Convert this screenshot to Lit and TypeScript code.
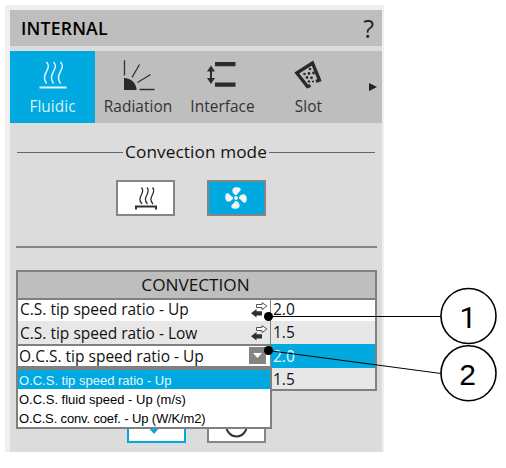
import { LitElement, html, css, svg } from "lit";
import { customElement } from "lit/decorators.js";
import { classMap } from "lit/directives/class-map.js";

const blade = "M10.2 8C8 6.5 7 4.5 7.5 2.5C8 .7 10 .2 12 .3C14 .3 15.8 1 15.7 2.5C15.5 4.8 12.5 5.5 11.8 8Z";

const icons = {
  fluidic: svg`<svg width="28" height="30" viewBox="0 0 28 30" fill="none" stroke="#e6f7fd">
    <path stroke-width="1.5" d="M7.500 2C14 9 .5 14 7.500 23.500M14.500 2C21 9 7.500 14 14.500 23.500M21.500 2C28 9 14.500 14 21.500 23.500"/>
    <path stroke-width="2" d="M.5 27.500H27.500"/></svg>`,
  radiation: svg`<svg width="32" height="32" viewBox="0 0 32 32" fill="none" stroke="#303030">
    <path d="M1 18A12.500 12 0 0 1 13.500 30H1Z" fill="#292929" stroke="none"/>
    <path stroke-width="1.300" d="M1.500 .3V15.500M9 17.500L16.500 4.500M14.500 22.500L27.500 14.500M16.500 29.500H31.500"/></svg>`,
  interface: svg`<svg width="30" height="26" viewBox="0 0 30 26" fill="#2b2b2b">
    <path d="M9 0H29.500V4.200H9ZM9 20.500H29.500V24.700H9ZM5 3.500L9 9.500H6V16H9L5 22L1 16H4V9.500H1Z"/></svg>`,
  slot: svg`<svg width="28" height="29" viewBox="0 0 28 29" fill="none" stroke="#292929">
    <path stroke-width="3.300" d="M16.500 25.500L13.500 26.500L2.800 13L18.500 3L25.500 20L22 21.500"/>
    <g fill="#292929" stroke="none"><circle cx="16" cy="9" r="1.300"/><circle cx="10.500" cy="14" r="1.300"/><circle cx="15" cy="13.500" r="1.400"/><circle cx="19.500" cy="13" r="1.400"/><circle cx="13" cy="17.500" r="1.400"/><circle cx="17.500" cy="17.800" r="1.400"/><circle cx="15" cy="21.500" r="1.300"/><circle cx="19" cy="21.500" r="1.100"/></g></svg>`,
  convection: svg`<svg width="22" height="23" viewBox="0 0 22 23" fill="none" stroke="#303030">
    <path stroke-width="1.300" d="M6.500 .5C11.500 6 .5 10 7 17M12 .5C17 6 6 10 12.500 17M17.500 .5C22.500 6 11.500 10 18 17"/>
    <path stroke-width="2" d="M1 22.500V19.500H21V22.500"/></svg>`,
  fan: svg`<svg width="22" height="22" viewBox="0 0 22 22" fill="#f4f4f4">
    <circle cx="11" cy="11" r="1.900"/>
    ${[0, 90, 180, 270].map((a) => svg`<path transform=${`rotate(${a} 11 11)`} d=${blade}/>`)}</svg>`,
  swap: svg`<svg width="17" height="16" viewBox="0 0 17 16">
    <path d="M5.500 2.500H11V.6L15.900 4L11 7.600V5.500H5.500Z" fill="#fff" stroke="#555"/>
    <path d="M11 9.300H5.500V7L0 11.300L5.500 15.600V13.400H11Z" fill="#303030"/></svg>`,
};

@customElement("app-root")
export class AppRoot extends LitElement {
  static styles = css`
    :host { display: block; position: relative; width: 506px; height: 468px; overflow: hidden;
      background: #fff; color: #111; font-family: "Open Sans", "Noto Sans", sans-serif; }
    * { box-sizing: border-box; }
    svg { display: block; flex: none; }
    .pad { padding: 5px 0 0 5px; }
    .panel { width: 379px; height: 447px; background: #dcdcdc; border: solid #efefef; border-width: 5px 2px 0 5px; }
    .head { height: 36px; background: #bebebe; display: flex; justify-content: space-between;
      align-items: center; padding: 0 8px 0 11px; }
    .title { font-size: 17.6px; font-weight: 600; letter-spacing: .2px; color: #000; }
    .help { font-size: 25px; line-height: 36px; color: #222; }
    .tabs { display: flex; margin-top: 5px; height: 72px; background: #bebebe; }
    .tab { width: 85px; display: flex; flex-direction: column; align-items: center; color: #333; }
    .tab.on { background: #00a9e0; color: #d8f2fb; }
    .pic { height: 44px; padding-top: 9px; }
    .pic.t1 { padding-left: 2px; }
    .pic.t2 { padding: 11px 4px 0 0; }
    .pic.t3 { padding-left: 1px; }
    .name { font-size: 15.4px; line-height: 24px; letter-spacing: .05px; white-space: nowrap; }
    .t1 + .name { padding-left: 1px; }
    .t3 + .name { padding-left: 2px; }
    .more { margin: 32px 0 0 19px; width: 8px; height: 8px; background: #222; clip-path: polygon(0 0, 100% 50%, 0 100%); }
    .mode { display: flex; align-items: center; gap: 2px; margin: 17px 7px 0 7px; height: 24px; }
    .mode i { flex: 1; height: 1px; background: #666; }
    .mode span { font-size: 17.2px; line-height: 24px; letter-spacing: .1px; }
    .buttons { display: flex; gap: 32px; margin: 16px 0 0 106px; }
    .btn { width: 59px; height: 36px; border: 2px solid #858585; background: #fff; display: flex; align-items: center; justify-content: center; }
    .btn:first-child { padding: 1px 0 0 0; }
    .btn.on { background: #00a9e0; padding-right: 2px; }
    .rule { height: 2px; margin: 30px 5px 0 6px; background: #858585; }
    .table { position: relative; margin: 22px 5px 0 6px; height: 121px; border: 2px solid #808080; background: #e7e7e7; }
    .caption { height: 28px; line-height: 26px; background: #bebebe; border-bottom: 2px solid #808080; text-align: center; font-size: 17.2px; padding-right: 2px; }
    .row { display: grid; grid-template-columns: 252px 1px 1fr; height: 23px; font-size: 15.5px; line-height: 22px; }
    .row.first { height: 21px; line-height: 19px; background: #fff; }
    .row.first .label { line-height: 17px; height: 19px; }
    .row.sel .value { background: #00a9e0; color: #e8f8ff; }
    .label { display: flex; justify-content: space-between; align-items: center; padding: 0 2px; white-space: nowrap; }
    .sep { background: #808080; }
    .value { padding-left: 2px; }
    .row.sel { line-height: 24px; }
    .row.sel .label { background: #fff; border-top: 2px solid #808080; padding: 0 4px 2px 1px; line-height: 19px; }
    .row.last { line-height: 25px; }
    .arrow { width: 17px; height: 17px; margin-top: -1px; background: #858585; display: flex; align-items: center; justify-content: center; }
    .arrow b { width: 9px; height: 5px; background: #fff; clip-path: polygon(0 0, 100% 0, 50% 100%); }
    .menu { position: absolute; left: -2px; top: 94px; width: 256px; height: 63px; z-index: 2;
      border: 2px solid #808080; border-top-width: 4px; background: #fff; font: 13px/21px "Liberation Sans", Arial, sans-serif; }
    .item { height: 19px; padding-left: 1px; white-space: nowrap; color: #000; }
    .item:last-child { letter-spacing: -.15px; }
    .item.on { background: #00a9e0; color: #e6f8ff; }
    .actions { display: flex; gap: 21px; margin: 16px 0 0 117px; }
    .act { width: 59px; height: 36px; border: 2px solid #858585; background: #fff; }
    .act.ok { border-color: #00a9e0; }
    .marks { position: absolute; left: 0; top: 0; z-index: 3; }
    .marks text { font: 30px "Liberation Sans", Arial, sans-serif; text-anchor: middle; fill: #000; }
    .marks .one { font-family: Roboto, sans-serif; }
  `;

  private tabs = [
    ["Fluidic", icons.fluidic], ["Radiation", icons.radiation],
    ["Interface", icons.interface], ["Slot", icons.slot],
  ] as const;

  private rows = [
    ["C.S. tip speed ratio - Up", "2.0"], ["C.S. tip speed ratio - Low", "1.5"],
    ["O.C.S. tip speed ratio - Up", "2.0"], ["", "1.5"],
  ];

  private options = ["O.C.S. tip speed ratio - Up", "O.C.S. fluid speed - Up (m/s)", "O.C.S. conv. coef. - Up (W/K/m2)"];

  render() {
    return html`
      <div class="pad"><div class="panel">
        <div class="head"><span class="title">INTERNAL</span><span class="help">?</span></div>
        <div class="tabs">
          ${this.tabs.map(([name, icon], i) => html`<div class=${classMap({ tab: true, on: i === 0 })}>
            <div class=${`pic t${i}`}>${icon}</div><div class="name">${name}</div></div>`)}
          <div class="more"></div>
        </div>
        <div class="mode"><i></i><span>Convection mode</span><i></i></div>
        <div class="buttons"><div class="btn">${icons.convection}</div><div class="btn on">${icons.fan}</div></div>
        <div class="rule"></div>
        <div class="table">
          <div class="caption">CONVECTION</div>
          ${this.rows.map(([label, value], i) => html`<div class=${classMap({ row: true, first: i === 0, sel: i === 2, last: i === 3 })}>
            <div class="label"><span>${label}</span>${i < 2 ? icons.swap : i === 2 ? html`<span class="arrow"><b></b></span>` : ""}</div>
            <div class="sep"></div><div class="value">${value}</div></div>`)}
          <div class="menu">${this.options.map((o, i) => html`<div class=${classMap({ item: true, on: i === 0 })}>${o}</div>`)}</div>
        </div>
        <div class="actions">
          <div class="act ok"><svg width="55" height="32" fill="none" stroke="#00a9e0" stroke-width="4"><path d="M16 12L25 22L37 8"/></svg></div>
          <div class="act"><svg width="55" height="32" fill="none" stroke="#333" stroke-width="2"><circle cx="27.500" cy="17.500" r="10"/></svg></div>
        </div>
      </div></div>
      <svg class="marks" width="506" height="468" fill="none" stroke="#000">
        <path d="M268 316.500H441M268 350.500L441 373.500"/>
        <circle cx="268.500" cy="316.500" r="4.500" fill="#000" stroke="none"/>
        <circle cx="268.500" cy="350.500" r="4.500" fill="#000" stroke="none"/>
        <circle cx="468.500" cy="316" r="27.500" fill="#fff" stroke-width="1.600"/>
        <circle cx="468.500" cy="373.300" r="27.500" fill="#fff" stroke-width="1.600"/>
        <g stroke="none"><text class="one" x="468" y="328">1</text><text x="467.500" y="385">2</text></g>
      </svg>`;
  }
}
